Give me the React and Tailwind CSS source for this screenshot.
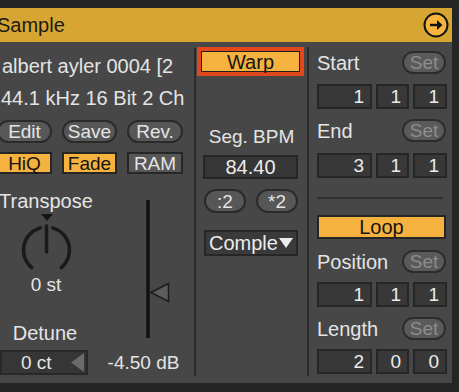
import React from 'react'

const font = "font-['Liberation_Sans',Arial,sans-serif]"

function Pill({ children, className = '' }) {
  return (
    <div
      className={`h-[23px] rounded-full border-2 border-[#2a2a2a] bg-[#575757] flex items-center justify-center text-[19px] leading-none text-[#e4e4e4] ${className}`}
    >
      {children}
    </div>
  )
}

function Toggle({ on, children, className = '' }) {
  return (
    <div
      className={`h-[22px] border-2 border-[#262626] flex items-center justify-center text-[19px] leading-none ${
        on ? 'bg-[#f6b23f] text-[#151515]' : 'bg-[#575757] text-[#e4e4e4]'
      } ${className}`}
    >
      {children}
    </div>
  )
}

function SetButton() {
  return (
    <div className="w-[44px] h-[23px] rounded-full border-2 border-[#2c2c2c] bg-[#5a5a5a] flex items-center justify-center text-[19px] leading-none text-[#8c8c8c]">
      Set
    </div>
  )
}

function NumBox({ value, className = '' }) {
  return (
    <div
      className={`h-[25px] border-2 border-[#262626] bg-[#383838] flex items-center justify-end pr-[6px] text-[19px] leading-none text-[#ececec] ${className}`}
    >
      {value}
    </div>
  )
}

function NumRow({ values }) {
  return (
    <div className="flex gap-[4px]">
      <NumBox value={values[0]} className="w-[55px]" />
      <NumBox value={values[1]} className="w-[33px]" />
      <NumBox value={values[2]} className="w-[34px]" />
    </div>
  )
}

function LabelRow({ label, className = '' }) {
  return (
    <div className={`flex items-center justify-between w-[129px] ${className}`}>
      <span className="text-[20px] leading-none text-[#e4e4e4]">{label}</span>
      <SetButton />
    </div>
  )
}

function Knob() {
  return (
    <svg width="92" height="60" viewBox="0 0 92 60" className="block">
      <polygon points="41,1 53,1 47,8" fill="#151515" />
      <path d="M31.7 54.6 A23 23 0 0 1 40.2 14.9" fill="none" stroke="#1a1a1a" strokeWidth="3.5" strokeLinecap="round" />
      <path d="M52.8 14.9 A23 23 0 0 1 61.3 54.6" fill="none" stroke="#1a1a1a" strokeWidth="3.5" strokeLinecap="round" />
      <line x1="46.5" y1="13" x2="46.5" y2="39" stroke="#1a1a1a" strokeWidth="3.5" strokeLinecap="round" />
    </svg>
  )
}

function Fader() {
  return (
    <svg width="103" height="142" viewBox="0 0 103 142" className="block">
      <line x1="56" y1="2" x2="56" y2="140" stroke="#111" strokeWidth="3.5" />
      <polygon points="59,94.5 76.5,85.5 76.5,103.5" fill="#5c5c5c" stroke="#1c1c1c" strokeWidth="1.5" />
    </svg>
  )
}

export default function App() {
  return (
    <div className={`w-[459px] h-[392px] bg-[#252525] flex flex-col pt-[8px] pr-[7px] pb-[9px] overflow-hidden ${font}`}>
      {/* title bar */}
      <div className="h-[34px] bg-[#d7a632] flex items-center justify-between pr-[3px]">
        <span className="-ml-[3px] text-[20px] leading-none text-[#1d1a12]">Sample</span>
        <svg width="26" height="26" viewBox="0 0 26 26">
          <circle cx="13" cy="13" r="11.5" fill="#f6b33d" stroke="#121212" strokeWidth="2" />
          <line x1="7" y1="13" x2="16" y2="13" stroke="#121212" strokeWidth="2.4" />
          <polygon points="14,8 19.5,13 14,18" fill="#121212" />
        </svg>
      </div>

      {/* body */}
      <div className="flex-1 bg-[#474747] flex text-[#e4e4e4]">
        {/* left column */}
        <div className="w-[194px] flex flex-col pt-[12px]">
          <div className="h-[24px] leading-[24px] text-[20px] whitespace-nowrap pl-[2px]">albert ayler 0004 [2</div>
          <div className="h-[24px] leading-[24px] text-[20px] whitespace-nowrap mt-[8px] pl-[1px]">44.1 kHz 16 Bit 2 Ch</div>
          <div className="flex gap-[10px] mt-[10px] -ml-[3px]">
            <Pill className="w-[55px]">Edit</Pill>
            <Pill className="w-[55px]">Save</Pill>
            <Pill className="w-[56px]">Rev.</Pill>
          </div>
          <div className="flex gap-[10px] mt-[9px] -ml-[3px]">
            <Toggle on className="w-[55px]">HiQ</Toggle>
            <Toggle on className="w-[55px]">Fade</Toggle>
            <Toggle className="w-[56px]">RAM</Toggle>
          </div>

          <div className="flex">
            <div className="w-[92px] flex flex-col items-center">
              <div className="self-start -ml-[1px] mt-[15px] h-[24px] leading-[24px] text-[20px]">Transpose</div>
              <Knob />
              <div className="h-[24px] leading-[24px] text-[19px]">0 st</div>
              <div className="mt-[24px] h-[24px] leading-[24px] text-[20px] -ml-[2px]">Detune</div>
              <div className="self-start mt-[5px] w-[88px] h-[25px] border-2 border-[#282828] bg-[#363636] flex items-center justify-between pl-[19px] pr-[1px]">
                <span className="text-[19px] leading-none">0 ct</span>
                <svg width="15" height="19" viewBox="0 0 15 19">
                  <polygon points="1,9.5 14,0 14,19" fill="#6b6b6b" />
                </svg>
              </div>
            </div>
            <div className="flex-1 flex flex-col items-center">
              <div className="mt-[24px]">
                <Fader />
              </div>
              <div className="mt-[11px] h-[24px] leading-[24px] text-[19px]">-4.50 dB</div>
            </div>
          </div>
        </div>

        <div className="w-[2px] bg-[#2b2b2b] mt-[6px] mb-[7px]" />

        {/* middle column */}
        <div className="w-[111px] flex flex-col">
          <div className="mt-[5px] ml-[1px] w-[107px] h-[29px] border-[4px] border-[#e2481e]">
            <div className="h-full border border-[#1e1e1e] bg-[#f6b23f] flex items-center justify-center text-[20px] leading-none text-[#141414]">
              Warp
            </div>
          </div>
          <div className="mt-[49px] h-[24px] leading-[24px] text-[19px] text-center">Seg. BPM</div>
          <div className="mt-[6px] ml-[7px] w-[95px] h-[24px] border-2 border-[#262626] bg-[#363636] flex items-center justify-center text-[20px] leading-none text-[#ececec]">
            84.40
          </div>
          <div className="mt-[10px] ml-[8px] flex gap-[10px]">
            <Pill className="w-[42px] h-[24px]">:2</Pill>
            <Pill className="w-[42px] h-[24px]">*2</Pill>
          </div>
          <div className="mt-[17px] ml-[8px] w-[94px] h-[26px] border-2 border-[#262626] bg-[#3a3a3a] flex items-center justify-between pl-[3px] pr-[3px] text-[20px] leading-none text-[#ececec]">
            <span>Comple</span>
            <svg width="14" height="10" viewBox="0 0 14 10" className="mb-[1px]">
              <polygon points="0,0 14,0 7,10" fill="#ececec" />
            </svg>
          </div>
        </div>

        <div className="w-[2px] bg-[#2b2b2b] mt-[5px] mb-[7px]" />

        {/* right column */}
        <div className="flex-1 flex flex-col pl-[8px]">
          <LabelRow label="Start" className="mt-[9px]" />
          <div className="mt-[10px]"><NumRow values={['1', '1', '1']} /></div>
          <LabelRow label="End" className="mt-[10px]" />
          <div className="mt-[11px]"><NumRow values={['3', '1', '1']} /></div>
          <div className="mt-[19px] w-[126px] h-[2px] bg-[#2e2e2e]" />
          <div className="mt-[16px] w-[129px] h-[24px] border-2 border-[#262626] bg-[#f6b23f] flex items-center justify-center text-[20px] leading-none text-[#141414]">
            Loop
          </div>
          <LabelRow label="Position" className="mt-[11px]" />
          <div className="mt-[9px]"><NumRow values={['1', '1', '1']} /></div>
          <LabelRow label="Length" className="mt-[10px]" />
          <div className="mt-[9px]"><NumRow values={['2', '0', '0']} /></div>
        </div>
      </div>
    </div>
  )
}
